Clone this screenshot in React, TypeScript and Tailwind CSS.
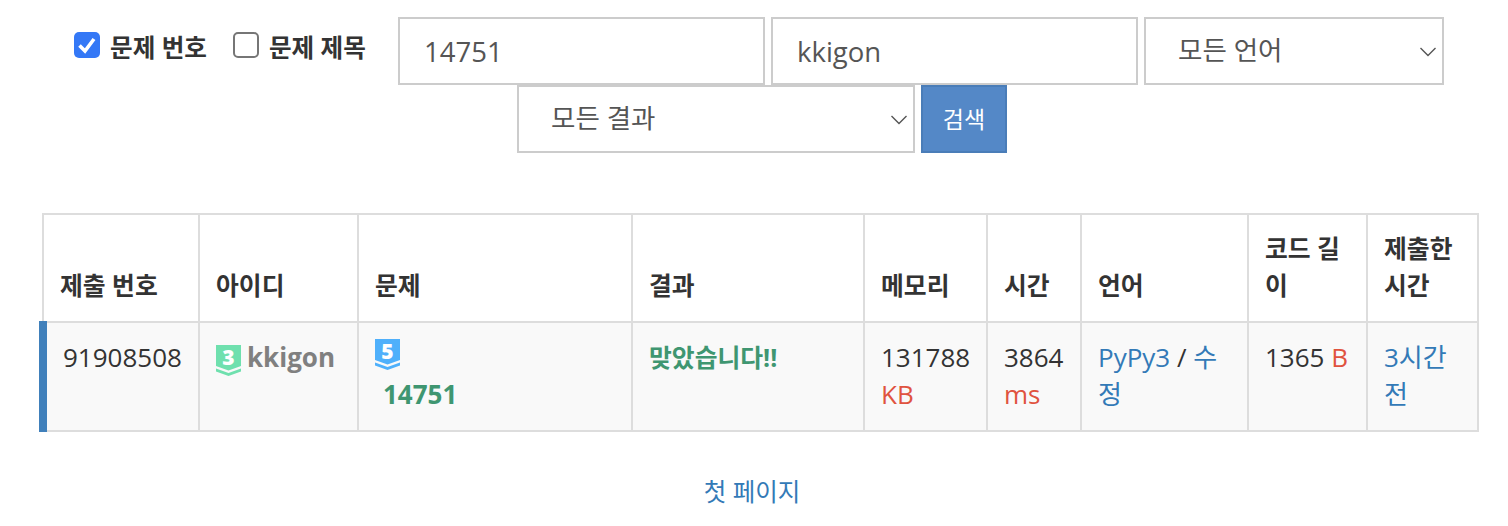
const font = "font-['Open_Sans','Noto_Sans_CJK_KR',sans-serif]";

function Tier({ n, color }: { n: string; color: string }) {
    return (
        <svg width="25" height="31" viewBox="0 0 25 31" className="block shrink-0 overflow-visible">
            <path d="M0 0H25V21L12.5 25.5L0 21Z" fill={color} />
            <path d="M0 23.5L12.5 28L25 23.5V26.5L12.5 31L0 26.5Z" fill={color} />
            <text x="12.5" y="19.5" textAnchor="middle" fontSize="21" fontWeight="800" fill="#fff" fontFamily="Open Sans">{n}</text>
        </svg>
    );
}

function Check({ label, checked }: { label: string; checked?: boolean }) {
    return (
        <label className="flex items-center h-[26px] mr-[26px]">
            {checked ? (
                <span className="w-[26px] h-[26px] rounded-[5px] bg-[#3478f6] flex items-center justify-center">
                    <svg width="20" height="20" viewBox="0 0 20 20">
                        <path d="M2.5 10.5L8 16L17 4" fill="none" stroke="#fff" strokeWidth="3.6" />
                    </svg>
                </span>
            ) : (
                <span className="w-[26px] h-[26px] rounded-[5px] bg-white border-2 border-[#767676]" />
            )}
            <span className="ml-[10px] mt-[6px] text-[24.6px] font-bold text-[#333] leading-none whitespace-nowrap">{label}</span>
        </label>
    );
}

function Select({ label, width }: { label: string; width: string }) {
    return (
        <div className={`${width} h-[68px] border-2 border-[#ccc] bg-white flex items-center justify-between pl-[32px] pr-[6px] text-[26.5px] text-[#555]`}>
            <span className="-mt-[1px]">{label}</span>
            <svg width="16" height="10" viewBox="0 0 16 10" className="mt-[2px]">
                <path d="M0.5 1L8 8.5L15.5 1" fill="none" stroke="#555" strokeWidth="1.4" />
            </svg>
        </div>
    );
}

const headers = ['제출 번호', '아이디', '문제', '결과', '메모리', '시간', '언어', '코드 길이', '제출한 시간'];
const cols = ['w-[156px]', 'w-[159px]', 'w-[274px]', 'w-[232px]', 'w-[123px]', 'w-[94px]', 'w-[167px]', 'w-[119px]', 'w-[111px]'];
const cell = 'border-2 border-[#ddd] px-[16px] pt-[16px] pb-[17px]';

export default function App() {
    return (
        <div className={`${font} bg-white w-[1508px] h-[526px] overflow-hidden text-[26px] leading-[37px] text-[#333]`}>
            <div className="pt-[17px] pl-[74px] flex items-start">
                <div className="flex pt-[15px] w-[324px]">
                    <Check label="문제 번호" checked />
                    <Check label="문제 제목" />
                </div>
                <input readOnly value="14751" className="w-[367px] h-[68px] border-2 border-[#ccc] px-[24px] text-[27.5px] text-[#555] outline-none" />
                <input readOnly value="kkigon" className="ml-[6px] w-[367px] h-[68px] border-2 border-[#ccc] px-[24px] text-[27.5px] text-[#555] outline-none" />
                <div className="ml-[6px]"><Select label="모든 언어" width="w-[300px]" /></div>
            </div>
            <div className="pl-[517px] flex">
                <Select label="모든 결과" width="w-[398px]" />
                <button className="ml-[6px] w-[86px] h-[68px] bg-[#5488c7] border-2 border-[#4a7db8] text-white text-[23px]">검색</button>
            </div>

            <table className="mt-[60px] ml-[39px] w-[1435px] table-fixed border-collapse">
                <colgroup>
                    {cols.map(c => <col key={c} className={c} />)}
                </colgroup>
                <thead>
                    <tr>
                        {headers.map(h => (
                            <th key={h} className="border-2 border-[#ddd] px-[16px] pt-[15px] pb-[17px] align-bottom text-left font-bold text-[24.8px]">{h}</th>
                        ))}
                    </tr>
                </thead>
                <tbody>
                    <tr className="bg-[#f9f9f9] align-top">
                        <td className={`${cell} border-l-8 border-l-[#4080bb]`}>91908508</td>
                        <td className={cell}>
                            <div className="flex items-start gap-[6px] font-bold text-[#808080]">
                                <span className="pt-[6px]"><Tier n="3" color="#6fe0ae" /></span>
                                <span>kkigon</span>
                            </div>
                        </td>
                        <td className={cell}>
                            <Tier n="5" color="#4fb0fb" />
                            <div className="pl-[8px] mt-[6px] -mb-[2px] font-bold text-[#3f9671]">14751</div>
                        </td>
                        <td className={`${cell} font-bold text-[#3f9671] text-[24.8px]`}>맞았습니다!!</td>
                        <td className={cell}>131788 <span className="text-[#e0533f]">KB</span></td>
                        <td className={cell}>3864 <span className="text-[#e0533f]">ms</span></td>
                        <td className={cell}><span className="text-[#337ab7]">PyPy3</span> / <span className="text-[#337ab7]">수정</span></td>
                        <td className={cell}>1365 <span className="text-[#e0533f]">B</span></td>
                        <td className={`${cell} text-[#337ab7]`}>3시간 전</td>
                    </tr>
                </tbody>
            </table>

            <div className="mt-[41px] text-center text-[#337ab7] text-[24.5px] pr-[4px]">첫 페이지</div>
        </div>
    );
}
